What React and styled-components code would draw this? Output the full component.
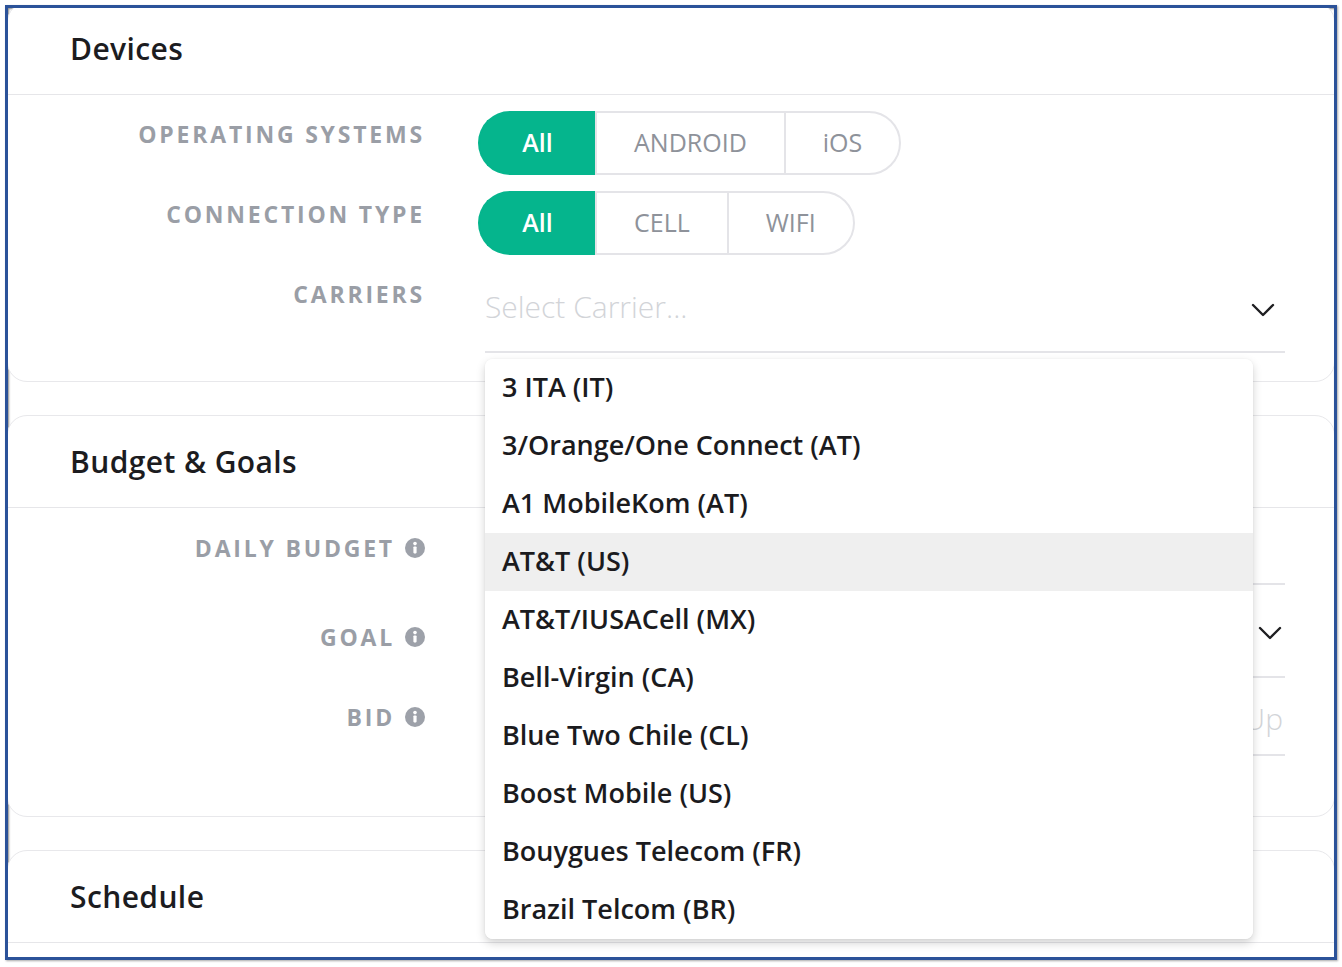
import styled, { createGlobalStyle } from 'styled-components';

const GlobalStyle = createGlobalStyle`
   html, body {
      margin: 0;
      padding: 0;
      background: #fff;
      font-family: 'Open Sans', Lato, sans-serif;
   }
   * {
      box-sizing: border-box;
   }
`;

const carriers = [
   '3 ITA (IT)',
   '3/Orange/One Connect (AT)',
   'A1 MobileKom (AT)',
   'AT&T (US)',
   'AT&T/IUSACell (MX)',
   'Bell-Virgin (CA)',
   'Blue Two Chile (CL)',
   'Boost Mobile (US)',
   'Bouygues Telecom (FR)',
   'Brazil Telcom (BR)',
];

const Chevron = () => (
   <svg width="24" height="14" viewBox="0 0 24 14" fill="none">
      <polyline points="2,2 12,12 22,2" stroke="#1f1f22" strokeWidth="2.4" strokeLinecap="round" strokeLinejoin="round" />
   </svg>
);

const InfoIcon = () => (
   <svg width="20" height="20" viewBox="0 0 20 20">
      <circle cx="10" cy="10" r="10" fill="#9da1a9" />
      <rect x="8.4" y="8.4" width="3.2" height="7" rx="0.8" fill="#fff" />
      <circle cx="10" cy="5.6" r="1.8" fill="#fff" />
   </svg>
);

const Segmented = ({ options, active }) => (
   <SegGroup>
      {options.map((opt, i) => (
         <Segment key={opt} active={opt === active} last={i === options.length - 1} first={i === 0}>
            {opt}
         </Segment>
      ))}
   </SegGroup>
);

const App = () => {
   return (
      <>
         <GlobalStyle />
         <Frame>
            <Stack>
               <Card>
                  <CardHeader>Devices</CardHeader>
                  <CardBody top={16} bottom={28}>
                     <Row>
                        <Label>Operating Systems</Label>
                        <Segmented options={['All', 'ANDROID', 'iOS']} active="All" />
                     </Row>
                     <Row>
                        <Label>Connection Type</Label>
                        <Segmented options={['All', 'CELL', 'WIFI']} active="All" />
                     </Row>
                     <Row>
                        <Label>Carriers</Label>
                        <SelectWrap>
                           <Select height={82} pad={10}>
                              <Placeholder>Select Carrier...</Placeholder>
                              <ChevronBox right={10} down={7}>
                                 <Chevron />
                              </ChevronBox>
                           </Select>
                           <Menu>
                              {carriers.map((c) => (
                                 <MenuItem key={c} highlighted={c === 'AT&T (US)'}>
                                    {c}
                                 </MenuItem>
                              ))}
                           </Menu>
                        </SelectWrap>
                     </Row>
                  </CardBody>
               </Card>

               <Card>
                  <CardHeader>Budget &amp; Goals</CardHeader>
                  <CardBody top={17} bottom={60}>
                     <Row after={13}>
                        <Label>
                           Daily Budget <InfoIcon />
                        </Label>
                        <Field height={60} />
                     </Row>
                     <Row>
                        <Label>
                           Goal <InfoIcon />
                        </Label>
                        <Select height={64} pad={24} indent={7}>
                           <Placeholder />
                           <ChevronBox right={3}>
                              <Chevron />
                           </ChevronBox>
                        </Select>
                     </Row>
                     <Row>
                        <Label>
                           Bid <InfoIcon />
                        </Label>
                        <Field height={62} pad={12}>
                           <Placeholder right>Bid Up</Placeholder>
                        </Field>
                     </Row>
                  </CardBody>
               </Card>

               <Card>
                  <CardHeader>Schedule</CardHeader>
                  <CardBody top={17} bottom={120} />
               </Card>
            </Stack>
         </Frame>
      </>
   );
};

const Frame = styled.div`
   margin: 5px;
   height: 955px;
   border: 3px solid #2b5299;
   overflow: hidden;
   background: #fff;
   box-shadow: 1px 1px 2px rgba(0, 0, 0, 0.35), inset 1px 1px 2px rgba(0, 0, 0, 0.45);
`;

const Stack = styled.div`
   display: flex;
   flex-direction: column;
   gap: 33px;
   margin: -6px -1px 0;
`;

const Card = styled.section`
   background: #fff;
   border: 1px solid #e8e8eb;
   border-radius: 20px;
`;

const CardHeader = styled.h2`
   margin: 0;
   height: 92px;
   display: flex;
   align-items: center;
   padding: 0 0 0 62px;
   border-bottom: 1px solid #e6e6e9;
   font-size: 30px;
   font-weight: 600;
   letter-spacing: 0.4px;
   color: #1c1c1f;
`;

const CardBody = styled.div`
   display: flex;
   flex-direction: column;
   gap: 16px;
   padding: ${({ top }) => top}px 49px ${({ bottom }) => bottom}px 0;
`;

const Row = styled.div`
   display: grid;
   grid-template-columns: 417px 1fr;
   column-gap: 53px;
   align-items: start;
   margin-bottom: ${({ after }) => after || 0}px;
`;

const Label = styled.div`
   display: flex;
   justify-content: flex-end;
   align-items: center;
   gap: 10px;
   padding-top: 8px;
   line-height: 30px;
   font-size: 23px;
   font-weight: 700;
   letter-spacing: 2.8px;
   text-transform: uppercase;
   color: #9a9ea6;
`;

const SegGroup = styled.div`
   display: inline-flex;
   justify-self: start;
   height: 64px;
`;

const Segment = styled.div`
   display: flex;
   align-items: center;
   justify-content: center;
   min-width: 117px;
   padding: 0 37px 3px;
   border: 2px solid ${({ active }) => (active ? '#05b58d' : '#e4e4e8')};
   border-right-width: ${({ last }) => (last ? '2px' : '0')};
   border-radius: ${({ first, last }) => (first ? '32px 0 0 32px' : last ? '0 32px 32px 0' : '0')};
   background: ${({ active }) => (active ? '#05b58d' : '#fff')};
   color: ${({ active }) => (active ? '#fff' : '#8e929a')};
   font-size: 25px;
   font-weight: ${({ active }) => (active ? 600 : 400)};
`;

const SelectWrap = styled.div`
   position: relative;
   margin-left: 7px;
`;

const Select = styled.div`
   display: flex;
   align-items: center;
   justify-content: space-between;
   height: ${({ height }) => height}px;
   padding-bottom: ${({ pad }) => pad}px;
   margin-left: ${({ indent }) => indent || 0}px;
   border-bottom: 2px solid #e4e4e8;
`;

const Field = styled.div`
   display: flex;
   align-items: center;
   justify-content: flex-end;
   height: ${({ height }) => height}px;
   padding-bottom: ${({ pad }) => pad || 0}px;
   margin-left: 7px;
   border-bottom: 2px solid #e4e4e8;
`;

const Placeholder = styled.span`
   font-size: 30px;
   font-weight: 300;
   color: #d2d4d8;
   margin-right: ${({ right }) => (right ? '2px' : '0')};
`;

const ChevronBox = styled.span`
   display: flex;
   margin-right: ${({ right }) => right}px;
   margin-top: ${({ down }) => down || 0}px;
`;

const Menu = styled.ul`
   position: absolute;
   top: calc(100% + 6px);
   left: 0;
   right: 32px;
   z-index: 10;
   margin: 0;
   padding: 0;
   list-style: none;
   background: #fff;
   border-radius: 8px;
   overflow: hidden;
   box-shadow: 0 4px 10px rgba(0, 0, 0, 0.18), 0 0 2px rgba(0, 0, 0, 0.06);
`;

const MenuItem = styled.li`
   display: flex;
   align-items: center;
   height: 58px;
   padding: 0 17px 3px;
   font-size: 27px;
   font-weight: 600;
   color: #1b1b1e;
   background: ${({ highlighted }) => (highlighted ? '#efefef' : '#fff')};
`;

export default App;
